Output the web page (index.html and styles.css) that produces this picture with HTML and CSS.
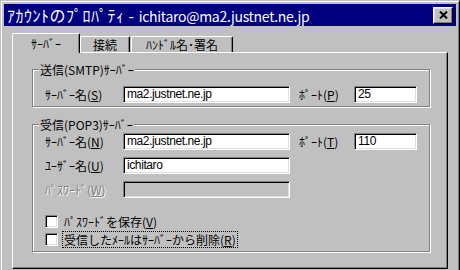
FILE: index.html
```html
<!DOCTYPE html>
<html lang="ja">
<head>
    <meta charset="UTF-8">
    <title>アカウントのプロパティ</title>
    <link rel="stylesheet" href="styles.css">
</head>
<body>
    <div class="window">
        <div class="titlebar">
            <span class="title">ｱｶｳﾝﾄのﾌﾟﾛﾊﾟﾃｨ - <span class="title-account">ichitaro@ma2.justnet.ne.jp</span></span>
            <button class="close-button">
                <svg width="9" height="8" viewBox="0 0 9 8">
                    <path d="M1 0.5 L8 7.5 M8 0.5 L1 7.5" stroke="#000" stroke-width="2" fill="none"/>
                </svg>
            </button>
        </div>

        <div class="content">
            <div class="tabs">
                <div class="tab active">ｻｰﾊﾞｰ</div>
                <div class="tab">接続</div>
                <div class="tab">ﾊﾝﾄﾞﾙ名･署名</div>
            </div>

            <div class="panel">
                <fieldset class="group smtp">
                    <legend>送信(SMTP)ｻｰﾊﾞｰ</legend>
                    <div class="row">
                        <span class="label">ｻｰﾊﾞｰ名(<u>S</u>)</span>
                        <div class="field wide">ma2.justnet.ne.jp</div>
                        <span class="label port">ﾎﾟｰﾄ(<u>P</u>)</span>
                        <div class="field short">25</div>
                    </div>
                </fieldset>

                <fieldset class="group pop">
                    <legend>受信(POP3)ｻｰﾊﾞｰ</legend>
                    <div class="row">
                        <span class="label">ｻｰﾊﾞｰ名(<u>N</u>)</span>
                        <div class="field wide">ma2.justnet.ne.jp</div>
                        <span class="label port">ﾎﾟｰﾄ(<u>T</u>)</span>
                        <div class="field short">110</div>
                    </div>
                    <div class="row">
                        <span class="label">ﾕｰｻﾞｰ名(<u>U</u>)</span>
                        <div class="field wide">ichitaro</div>
                    </div>
                    <div class="row">
                        <span class="label disabled">ﾊﾟｽﾜｰﾄﾞ(<u>W</u>)</span>
                        <div class="field wide disabled"></div>
                    </div>

                    <div class="checks">
                        <div class="check-row">
                            <span class="check"></span>
                            <span class="check-label">ﾊﾟｽﾜｰﾄﾞを保存(<u>V</u>)</span>
                        </div>
                        <div class="check-row">
                            <span class="check"></span>
                            <span class="check-label focused">受信したﾒｰﾙはｻｰﾊﾞｰから削除(<u>R</u>)</span>
                        </div>
                    </div>
                </fieldset>
            </div>
        </div>
    </div>
</body>
</html>
```

FILE: styles.css
```css
body {
    margin: 0;
    background-color: #c0c0c0;
    font-family: "Noto Sans CJK JP", sans-serif;
    font-size: 12px;
    overflow: hidden;
}
.window {
    width: 460px;
    height: 300px;
    box-sizing: border-box;
    background-color: #c0c0c0;
    border: 1px solid;
    border-color: #c0c0c0 #000 #000 #c0c0c0;
    box-shadow: inset 1px 1px #fff, inset -1px -1px #808080;
    padding: 3px;
}
.titlebar {
    height: 22px;
    background-color: #000080;
    color: white;
    display: flex;
    align-items: center;
    padding: 0 3px;
}
.title {
    font-size: 16px;
    letter-spacing: 0.5px;
    line-height: 22px;
    white-space: nowrap;
}
.title-account {
    font-size: 14px;
    letter-spacing: -0.3px;
}
.close-button {
    margin-left: auto;
    width: 20px;
    height: 17px;
    padding: 0;
    background-color: #c0c0c0;
    border: 1px solid;
    border-color: #fff #000 #000 #fff;
    box-shadow: inset -1px -1px #808080, inset 1px 1px #dfdfdf;
    display: flex;
    align-items: center;
    justify-content: center;
}
.content {
    padding: 7px 8px 0;
}
.tabs {
    display: flex;
    align-items: flex-end;
}
.tab {
    height: 16px;
    line-height: 15px;
    box-sizing: border-box;
    padding: 0 12px;
    border-top: 1px solid #fff;
    border-left: 1px solid #fff;
    border-right: 1px solid #000;
    border-radius: 2px 2px 0 0;
    box-shadow: inset -1px 0 #808080;
    white-space: nowrap;
}
.tab:last-child {
    margin-left: 1px;
    padding: 0 14px;
}
.tab.active {
    height: 20px;
    line-height: 19px;
    padding: 0 18px;
    margin-bottom: -1px;
    background-color: #c0c0c0;
    position: relative;
    z-index: 1;
}
.panel {
    width: 436px;
    height: 217px;
    box-sizing: border-box;
    border: 1px solid;
    border-color: #fff #000 #000 #fff;
    box-shadow: inset -1px -1px #808080;
    padding: 10px 0 0 19px;
}
.group {
    width: 398px;
    box-sizing: border-box;
    margin: 0;
    min-inline-size: 0;
    border: 1px solid #808080;
    box-shadow: inset 1px 1px #fff, 1px 1px #fff;
    padding: 10px 0 3px 12px;
}
.group legend {
    margin-left: -6px;
    padding: 0 1px;
    line-height: 13px;
    background-color: #c0c0c0;
}
.group.pop {
    margin-top: 11px;
    padding-top: 2px;
}
.row {
    display: flex;
    align-items: center;
    height: 17px;
}
.row + .row {
    margin-top: 7px;
}
.label {
    width: 78px;
    white-space: nowrap;
}
.label.port {
    width: 55px;
    margin-left: 9px;
}
.label.disabled {
    color: #808080;
    text-shadow: 1px 1px #fff;
}
.field {
    height: 17px;
    box-sizing: border-box;
    background-color: white;
    border: 1px solid;
    border-color: #808080 #fff #fff #808080;
    box-shadow: inset 1px 1px #000, inset -1px -1px #dfdfdf;
    padding: 0 3px;
    line-height: 15px;
    font-family: "Liberation Sans", "Noto Sans CJK JP", sans-serif;
    letter-spacing: -0.4px;
    white-space: nowrap;
}
.field.wide {
    width: 167px;
}
.field.short {
    width: 63px;
}
.field.disabled {
    background-color: #c0c0c0;
}
.checks {
    margin-top: 15px;
}
.check-row {
    display: flex;
    align-items: center;
    height: 17px;
}
.check-row + .check-row {
    margin-top: 1px;
}
.check {
    width: 13px;
    height: 13px;
    box-sizing: border-box;
    background-color: white;
    border: 1px solid;
    border-color: #808080 #fff #fff #808080;
    box-shadow: inset 1px 1px #000, inset -1px -1px #dfdfdf;
}
.check-label {
    margin-left: 4px;
    height: 17px;
    box-sizing: border-box;
    line-height: 15px;
    padding: 0 1px;
    border: 1px dotted transparent;
    white-space: nowrap;
}
.check-label.focused {
    border-color: #000;
}
```
